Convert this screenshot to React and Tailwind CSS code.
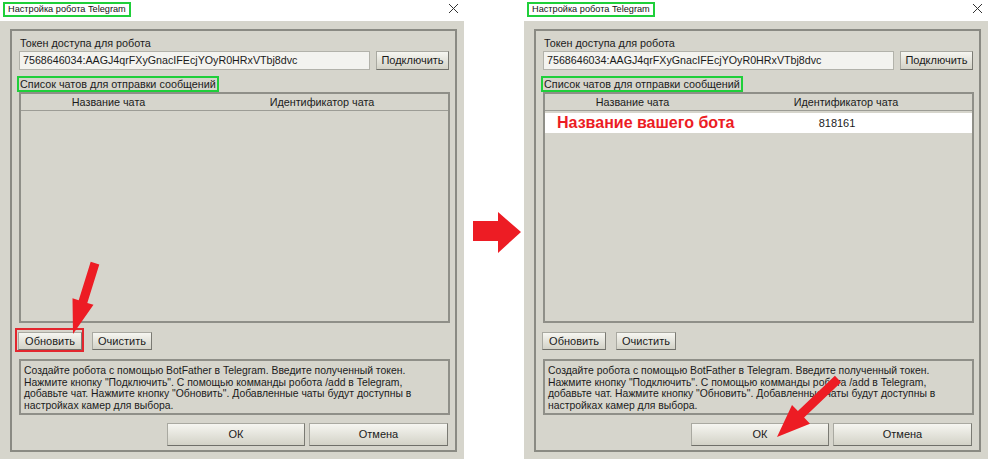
import React from "react";

const font = { fontFamily: '"Liberation Sans", Arial, sans-serif' };

function Btn({ children, className = "" }) {
    return (
        <div className={`flex items-center justify-center bg-gradient-to-b from-[#f6f6f1] to-[#d3d2c7] border border-[#a9a9a1] border-b-[#6f6f69] border-r-[#7a7a73] text-[11px] text-[#1b1b1b] ${className}`}>
            {children}
        </div>
    );
}

function SettingsWindow({ filled, marked }) {
    return (
        <div className="w-[464px] flex flex-col shrink-0">
            {/* Title bar */}
            <div className="h-[21px] bg-white flex items-start justify-between pl-[3px] pr-[5px] pt-[2px]">
                <div className="h-[15px] border-2 border-[#1fcf3a] px-[3px] flex items-center text-[9.2px] text-[#111] leading-none">
                    Настройка робота Telegram
                </div>
                <svg width="11" height="11" viewBox="0 0 11 11" className="mt-[1px]">
                    <path d="M1 1L10 10M10 1L1 10" stroke="#333" strokeWidth="1" fill="none" />
                </svg>
            </div>

            {/* Body */}
            <div className="bg-[#d6d5cc] pl-[10px] pr-[7px] pt-[8px] pb-[7px]">
                <div className="border-2 border-[#8a8a83] pl-[7px] pr-[5px] pt-[5px] pb-[4px] flex flex-col text-[#1b1b1b]">
                    <div className="h-[14px] text-[10.8px] leading-[14px] pl-[1px]">Токен доступа для робота</div>

                    <div className="mt-[1px] h-[19px] flex gap-[6px] pr-[1px]">
                        <div className="flex-1 bg-[#f3f3ef] border border-[#b2b2aa] flex items-center pl-[3px] text-[10.7px]">
                            7568646034:AAGJ4qrFXyGnacIFEcjYOyR0HRxVTbj8dvc
                        </div>
                        <Btn className="w-[73px]">Подключить</Btn>
                    </div>

                    <div className="mt-[6px] h-[16px] flex">
                        <div className="-ml-[2px] border-2 border-[#1fcf3a] px-[1px] flex items-center text-[10.8px] leading-none">
                            Список чатов для отправки сообщений
                        </div>
                    </div>

                    {/* Chat table */}
                    <div className="h-[231px] border-2 border-[#8f8f88] bg-[#d6d5cc] flex flex-col">
                        <div className="h-[17px] flex border-b border-[#9c9c95] text-[10.8px]">
                            <div className="w-[175px] flex items-center justify-center">Название чата</div>
                            <div className="flex-1 flex items-center justify-center">Идентификатор чата</div>
                        </div>
                        {filled && (
                            <div className="mt-[2px] h-[20px] bg-white flex items-center">
                                <div className="w-[175px] pl-[12px] text-[16px] font-bold text-[#ec1c24] whitespace-nowrap leading-none">
                                    Название вашего бота
                                </div>
                                <div className="flex-1 text-center pr-[18px] text-[11px]">818161</div>
                            </div>
                        )}
                    </div>

                    <div className="mt-[9px] h-[18px] flex gap-[10px]">
                        <div className="relative -ml-[1px]">
                            <Btn className="w-[64px] h-[18px]">Обновить</Btn>
                            {marked && (
                                <div className="absolute -left-[3px] -top-[4px] -right-[2px] -bottom-[2px] border-2 border-[#e3262e]" />
                            )}
                        </div>
                        <Btn className="w-[60px] h-[18px]">Очистить</Btn>
                    </div>

                    <div className="mt-[9px] h-[56px] border-2 border-[#8f8f88] pl-[3px] pt-[4px] text-[10.4px] leading-[11.7px] whitespace-nowrap">
                        <div>Создайте робота с помощью BotFather в Telegram. Введите полученный токен.</div>
                        <div>Нажмите кнопку "Подключить". С помощью комманды робота /add в Telegram,</div>
                        <div>добавьте чат. Нажмите кнопку "Обновить". Добавленные чаты будут доступны в</div>
                        <div>настройках камер для выбора.</div>
                    </div>

                    <div className="mt-[8px] h-[23px] flex justify-end gap-[4px] pr-[2px]">
                        <Btn className="w-[138px] h-[23px]">ОК</Btn>
                        <Btn className="w-[139px] h-[23px]">Отмена</Btn>
                    </div>
                </div>
            </div>
        </div>
    );
}

export default function App() {
    return (
        <div className="relative w-[992px] h-[462px] bg-white overflow-hidden" style={font}>
            <div className="flex">
                <SettingsWindow marked />
                <div className="w-[60px] shrink-0" />
                <SettingsWindow filled />
            </div>

            {/* Annotation arrows */}
            <svg className="absolute inset-0 pointer-events-none" width="992" height="462">
                <polygon
                    fill="#ed1c24"
                    points="90.7,261.7 99.3,264.4 87.3,302.9 93.5,304.8 73,334 72.5,298.2 78.7,300.2"
                />
                <polygon fill="#ed1c24" points="473,221 498,221 498,212 521,232 498,253 498,241 473,241" />
                <polygon
                    fill="#ed1c24"
                    points="841.1,382.3 834.9,375.7 797.9,411 792,404.9 777,437 810,423.7 804.1,417.6"
                />
            </svg>
        </div>
    );
}
